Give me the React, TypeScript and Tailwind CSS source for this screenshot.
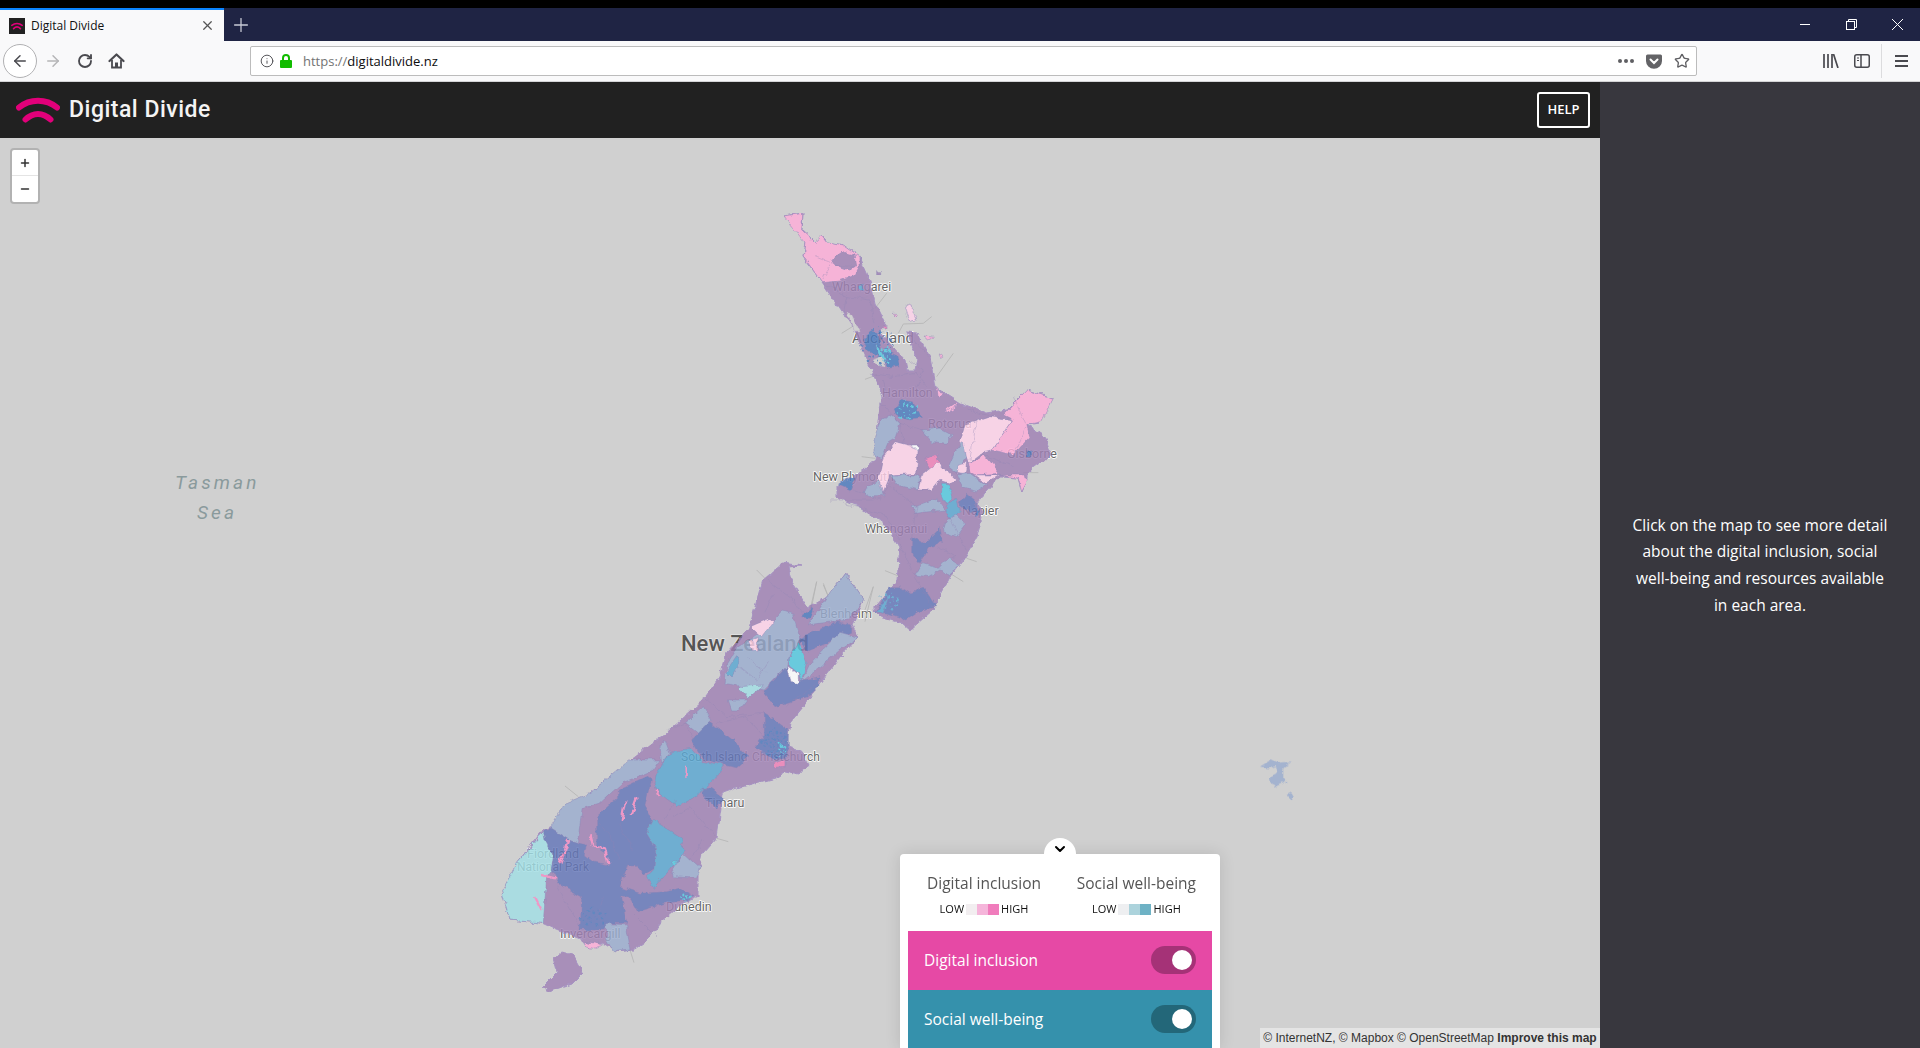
import React from 'react';
import { ArrowLeft, ArrowRight, ChevronDown, Info, Minus, Plus, RotateCw, Star, X } from 'lucide-react';

const C = {
  purple: '#9f81b4',
  pink: '#feadd8',
  pale: '#ffd4eb',
  rose: '#f07fb8',
  grey: '#9aaccf',
  blue: '#6376b9',
  deep: '#4a78bc',
  teal: '#59a7d1',
  cyan: '#52c8e0',
  ice: '#a1dee4',
  white: '#ffffff',
  sea: '#d0d0d0',
};

type Region = [string, string];
type Line = string;

// outlines in page coordinates
const northIsland =
  '784,216 803,213 802,230 815,242 822,235 827,242 843,245 860,257 870,280 875,303 885,323 880,333 893,347 905,360 907,370 915,370 917,360 910,343 907,332 917,333 930,357 935,387 960,403 987,413 1007,410 1027,390 1053,398 1040,423 1027,425 1045,437 1052,455 1027,473 1027,480 1022,492 1018,478 1000,477 985,493 977,503 983,513 977,537 963,560 950,577 933,610 910,630 902,623 880,617 873,610 897,580 900,547 887,527 860,507 837,497 837,487 857,475 877,457 878,420 882,397 880,388 867,360 853,327 822,282 803,257 805,243 802,230';
const southIsland =
  '783,563 802,566 788,567 792,583 808,608 827,597 845,573 863,600 852,625 858,638 840,657 820,683 803,707 790,723 786,745 800,750 808,765 800,775 785,772 775,778 740,787 723,793 717,837 703,853 698,873 698,897 683,903 660,923 647,940 633,950 617,952 603,943 590,948 583,940 557,930 542,923 510,920 502,892 517,863 543,830 567,820 590,793 630,760 670,730 703,700 720,677 727,653 748,630 763,580';
const stewart = '562,952 573,955 583,973 573,983 548,992 542,988 557,973 553,958';

// the four groups below keep the coordinates read off the 3x crops
const z4: Region[] = [
  [C.pink, '72,48 128,40 125,90 165,125 185,105 200,125 250,135 300,170 300,195 285,225 240,240 185,245 130,170 135,130'],
  [C.purple, '215,180 250,157 285,165 290,195 265,210 225,195'],
  [C.deep, '310,420 330,395 355,400 365,450 410,465 420,500 385,505 360,470 325,455'],
  [C.pale, '435,320 450,312 470,360 450,365'],
  [C.pink, '495,408 520,412 505,420'],
  [C.pink, '400,340 410,340 408,348'],
  [C.pink, '535,465 545,462 548,472 538,475'],
  [C.purple, '353,212 362,212 362,222 353,222'],
  [C.rose, '370,374 378,374 378,384 370,384'],
  [C.teal, '295,255 310,252 312,268 298,268'],
  [C.cyan, '345,430 365,450 380,480 360,470'],
  [C.sea, '340,480 370,470 375,500 350,495'],
  [C.sea, '262,340 275,345 300,395 285,395'],
  [C.pink, '530,560 550,585 535,590'],
  [C.pink, '560,625 590,605 585,630 560,640'],
];

const z5: Region[] = [
  [C.pink, '610,105 680,30 760,55 725,125 680,135 690,170 640,225 575,210 640,120'],
  [C.pale, '495,135 570,110 640,120 575,210 550,215 505,250 480,185'],
  [C.pink, '505,250 555,225 600,280 525,285 510,275'],
  [C.pale, '525,285 600,285 560,310'],
  [C.pink, '600,285 670,285 682,305 665,335 655,295'],
  [C.pale, '250,230 285,185 355,200 350,280 270,285 250,335 232,310'],
  [C.grey, '240,120 275,105 300,130 290,170 265,185 245,235 222,230 222,180'],
  [C.grey, '365,150 420,145 458,165 440,190 395,185'],
  [C.grey, '465,215 490,185 500,235 470,280 445,260'],
  [C.rose, '375,240 410,225 420,255 390,270'],
  [C.pale, '365,285 410,250 445,275 470,300 450,310 420,300 395,330 355,330'],
  [C.pale, '475,255 500,250 495,285 472,280'],
  [C.grey, '270,285 360,285 355,330 290,315'],
  [C.grey, '200,320 240,305 255,350 200,350 190,340'],
  [C.grey, '470,285 510,280 560,315 530,335 490,325'],
  [C.grey, '340,380 410,355 435,390 345,400'],
  [C.cyan, '425,310 440,310 460,350 440,375 425,345'],
  [C.teal, '445,370 470,355 478,390 455,420 435,390'],
  [C.blue, '478,370 500,340 530,365 530,395 510,395 490,390'],
  [C.grey, '440,420 465,405 497,435 470,470 430,455'],
  [C.blue, '335,470 375,490 420,445 427,485 385,505 360,550 335,515'],
  [C.grey, '345,585 365,550 415,565 445,535 478,555 450,585 420,570 385,590'],
  [C.deep, '115,315 150,290 165,295 150,330'],
  [C.blue, '225,695 270,620 300,620 330,640 370,625 410,680 365,690 320,720 265,700'],
  [C.teal, '225,695 265,650 250,700'],
  [C.deep, '285,90 300,60 340,65 365,115 330,120 295,110'],
  [C.pink, '440,95 470,70 450,100'],
  [C.deep, '680,215 695,212 695,228 682,228'],
  [C.deep, '525,395 540,395 530,412'],
  [C.white, '335,195 358,195 355,210 335,205'],
];

const z6: Region[] = [
  [C.grey, '200,345 235,290 280,260 330,225 370,180 400,190 420,270 385,320 380,350 310,420 245,410 195,400'],
  [C.pale, '270,230 330,205 340,215 305,260'],
  [C.pale, '265,275 295,265 290,305 275,300'],
  [C.grey, '445,225 500,140 555,70 610,150 565,210 480,220'],
  [C.blue, '420,265 530,215 575,225 575,250 500,280 440,305'],
  [C.grey, '425,395 450,340 540,250 595,265 540,300 470,360'],
  [C.cyan, '385,330 415,270 440,340 425,395 415,370 385,345'],
  [C.blue, '310,425 380,350 390,398 480,380 480,410 440,440 345,470'],
  [C.ice, '235,410 310,405 265,445'],
  [C.teal, '200,365 230,320 240,340 215,380'],
  [C.grey, '205,450 265,450 240,480 215,480'],
  [C.grey, '75,520 130,470 155,510 120,555'],
  [C.grey, '0,590 15,570 30,610 5,640'],
  [C.blue, '310,490 345,510 385,540 385,620 340,630 285,590 310,560'],
  [C.blue, '95,570 150,515 230,580 265,620 230,650 130,630'],
  [C.deep, '425,200 460,170 450,205'],
  [C.rose, '340,640 375,630 375,652 340,656'],
  [C.white, '380,345 415,372 415,400 390,398'],
];

const z7: Region[] = [
  [C.grey, '180,205 225,130 300,100 415,0 510,0 490,30 395,70 330,130 280,145 265,250 215,230'],
  [C.teal, '495,70 505,30 530,-10 570,-30 605,-35 640,5 700,15 690,40 650,80 600,120 560,140 510,100'],
  [C.blue, '640,85 665,85 705,115 680,145 645,115'],
  [C.ice, '160,215 190,290 185,330 170,350 160,490 60,480 35,395 80,310'],
  [C.blue, '160,210 185,205 240,240 290,255 283,285 310,305 355,315 350,280 320,260 320,170 385,110 385,90 470,50 485,60 465,135 490,180 470,220 500,270 495,325 460,345 440,315 410,315 390,380 450,400 530,395 570,385 615,410 590,420 525,430 445,455 420,415 395,410 410,490 370,490 340,510 270,510 275,410 210,375 185,330 190,290 165,240'],
  [C.teal, '490,180 575,235 580,280 540,325 490,385 470,350 495,325 500,270 470,220'],
  [C.cyan, '545,310 575,295 580,315 555,330'],
  [C.grey, '580,280 630,325 620,355 550,350 545,330'],
  [C.grey, '350,490 410,495 420,570 370,575 350,540'],
  [C.pink, '290,545 340,555 310,565 285,560'],
];

const z4Lines: Line[] = ['190,250 260,290 250,340', '260,290 330,300 345,370', '330,520 400,530 470,520 500,560', '370,540 385,600', '450,480 490,510 470,560', '460,420 505,470', '165,170 215,190 185,235', '215,195 290,200'];
const z5Lines: Line[] = ['240,65 300,130 370,150', '300,130 310,190 360,210', '160,330 240,360 270,310', '130,370 250,400 300,480', '270,320 350,380 335,470', '500,90 580,110', '540,220 640,260', '680,135 640,225', '440,400 500,510', '300,490 340,580 400,690', '90,360 220,360', '410,500 470,530 445,535', '640,50 680,140', '530,120 510,240'];
const z6Lines: Line[] = ['320,90 400,150 430,200', '340,130 310,190', '240,350 290,390 330,330', '260,320 320,370', '130,440 200,500 310,490', '170,520 260,500 320,570', '380,470 470,400', '20,540 75,520 100,570'];
const z7Lines: Line[] = ['550,170 600,140 680,230', '410,130 390,200 430,270', '320,180 360,230 390,300', '200,380 240,450 270,500', '430,460 500,530', '340,410 325,470 350,500', '600,300 640,240', '560,120 520,180'];

const z4Strays: Line[] = ['245,400 285,375', '380,280 345,325', '415,400 430,372 490,370 515,350', '580,460 530,530', '315,538 350,525'];
const z5Strays: Line[] = ['185,230 225,235', '670,278 715,278', '500,535 530,545', '450,580 490,605', '255,572 300,590', '35,680 50,605', '70,615 85,650', '220,620 195,690'];
const z6Strays: Line[] = ['290,60 315,85', '470,95 450,180', '490,100 505,140', '640,110 615,215'];
const z7Strays: Line[] = ['225,78 265,110', '680,235 715,245', '420,570 432,608'];

const z7Lakes: Line[] = ['405,125 395,180', '440,115 422,165', '300,220 310,260 345,265 355,310', '235,240 210,310', '155,345 195,355', '590,20 590,50', '500,90 505,105', '135,410 155,450'];

const labels: [string, number, number, number][] = [
  ['Whangarei', 832, 291, 12.5],
  ['Auckland', 852, 343, 15],
  ['Hamilton', 882, 397, 12.5],
  ['Rotorua', 928, 428, 12.5],
  ['Gisborne', 1007, 458, 12.5],
  ['New Plymouth', 813, 481, 12.5],
  ['Napier', 962, 515, 12.5],
  ['Whanganui', 865, 533, 12.5],
  ['Blenheim', 820, 618, 12.5],
  ['South Island', 681, 761, 12],
  ['Christchurch', 752, 761, 12],
  ['Timaru', 705, 807, 12.5],
  ['Dunedin', 666, 911, 12.5],
  ['Invercargill', 560, 938, 12.5],
  ['Fiordland', 527, 858, 12.5],
  ['National Park', 517, 871, 12],
];

// Auckland, Hamilton and Christchurch are made of many tiny areas
function specks(cx: number, cy: number, rx: number, ry: number, count: number, fill: string) {
  return Array.from({ length: count }, (_, i) => {
    const a = i * 2.399;
    const r = Math.sqrt((i + 0.5) / count);
    return <circle key={i} cx={cx + Math.cos(a) * r * rx} cy={cy + Math.sin(a) * r * ry} r={2 + (i % 3)} fill={fill} />;
  });
}

function Group({ x, y, regions, lines, lakes, children }: { x: number; y: number; regions: Region[]; lines: Line[]; lakes?: Line[]; children?: React.ReactNode }) {
  return (
    <g transform={`translate(${x} ${y}) scale(0.3333)`}>
      {regions.map(([fill, pts], i) => (
        <polygon key={i} points={pts} fill={fill} stroke={fill === C.sea ? fill : '#7c72b0'} strokeOpacity="0.55" strokeWidth="2.5" strokeLinejoin="round" />
      ))}
      {lines.map((pts, i) => (
        <polyline key={i} points={pts} fill="none" stroke="#8272ac" strokeOpacity="0.4" strokeWidth="2.5" />
      ))}
      {lakes?.map((pts, i) => (
        <polyline key={i} points={pts} fill="none" stroke="#f58cc4" strokeWidth="7" strokeLinejoin="round" />
      ))}
      {children}
    </g>
  );
}

function Strays({ x, y, lines }: { x: number; y: number; lines: Line[] }) {
  return (
    <g transform={`translate(${x} ${y}) scale(0.3333)`}>
      {lines.map((pts, i) => (
        <polyline key={i} points={pts} fill="none" stroke="#b4b4b4" strokeWidth="2.5" />
      ))}
    </g>
  );
}

function NzMap() {
  return (
    <svg className="absolute inset-0" width="1600" height="910" viewBox="0 138 1600 910">
      <defs>
        <filter id="rough" x="0" y="0" width="100%" height="100%" colorInterpolationFilters="sRGB">
          <feTurbulence type="fractalNoise" baseFrequency="0.13" numOctaves="3" seed="4" result="noise" />
          <feDisplacementMap in="SourceGraphic" in2="noise" scale="6" xChannelSelector="R" yChannelSelector="G" />
          <feGaussianBlur stdDeviation="0.45" />
        </filter>
      </defs>
      <g fontFamily="Roboto, sans-serif" paintOrder="stroke" strokeLinejoin="round">
        <text x="175" y="489" fontSize="19" fontStyle="italic" letterSpacing="3.1" fill="#8a9a9c">Tasman</text>
        <text x="197" y="519" fontSize="19" fontStyle="italic" letterSpacing="3.1" fill="#8a9a9c">Sea</text>
        <text x="681" y="651" fontSize="22" fontWeight="500" fill="#555" stroke="#e4e4e4" strokeWidth="1.5">New Zealand</text>
        {labels.map(([t, x, y, s]) => (
          <text key={t} x={x} y={y} fontSize={s} fill="#666" stroke="#fff" strokeWidth="1.5">{t}</text>
        ))}
      </g>
      <Strays x={760} y={200} lines={z4Strays} />
      <Strays x={800} y={380} lines={z5Strays} />
      <Strays x={660} y={550} lines={z6Strays} />
      <Strays x={490} y={760} lines={z7Strays} />
      <g opacity="0.82" filter="url(#rough)">
        <polygon points={northIsland} fill={C.purple} stroke="#9d85c0" strokeWidth="1" strokeLinejoin="round" />
        <polygon points={southIsland} fill={C.purple} stroke="#9d85c0" strokeWidth="1" strokeLinejoin="round" />
        <polygon points={stewart} fill={C.purple} stroke="#9d85c0" strokeWidth="1" strokeLinejoin="round" />
        <Group x={760} y={200} regions={z4} lines={z4Lines}>
          {specks(355, 440, 50, 60, 40, C.deep)}
          {specks(375, 465, 20, 25, 12, C.cyan)}
        </Group>
        <Group x={800} y={380} regions={z5} lines={z5Lines}>
          {specks(320, 90, 35, 30, 16, C.cyan)}
          {specks(265, 665, 30, 30, 14, C.teal)}
        </Group>
        <Group x={660} y={550} regions={z6} lines={z6Lines}>
          {specks(345, 580, 38, 45, 40, C.deep)}
          {specks(365, 600, 15, 20, 10, C.cyan)}
        </Group>
        <Group x={490} y={760} regions={z7} lines={z7Lines} lakes={z7Lakes}>
          {specks(310, 470, 40, 30, 18, C.deep)}
          {specks(590, 415, 22, 10, 8, C.cyan)}
        </Group>
        <g transform="translate(1240 740) scale(0.3333)" fill={C.grey}>
          <polygon points="60,80 95,58 115,68 155,65 130,85 130,115 140,125 110,140 92,130 90,112 112,100 108,78 85,85" />
          <polygon points="140,165 155,157 162,170 155,182 148,175" />
        </g>
      </g>
    </svg>
  );
}

function BrandMark({ className }: { className: string }) {
  return (
    <svg className={className} viewBox="0 0 44 26" fill="none" stroke="#e2007a" strokeLinecap="round">
      <path d="M3 10.5 C14 1.5 30 1.5 41 10.5" strokeWidth="6" />
      <path d="M9.5 22.5 C17 15 27 15 34.5 22.5" strokeWidth="6" />
    </svg>
  );
}

function TabStrip() {
  return (
    <div className="flex h-[33px] bg-[#1f2444]">
      <div className="flex w-[224px] items-center border-t-2 border-[#0a84ff] bg-[#f9f9fa] pl-[9px] pr-[9px]">
        <div className="flex h-4 w-4 items-center justify-center bg-[#212121]">
          <BrandMark className="h-2 w-3" />
        </div>
        <span className="ml-[6px] flex-1 text-xs text-[#111]">Digital Divide</span>
        <X size={15} strokeWidth={2} className="text-[#555]" />
      </div>
      <div className="flex w-[34px] items-center justify-center">
        <Plus size={22} strokeWidth={1.4} className="text-[#c8cad6]" />
      </div>
      <div className="flex-1" />
      <div className="flex items-center text-white">
        <div className="flex w-[46px] justify-center">
          <div className="h-px w-[10px] bg-white" />
        </div>
        <div className="flex w-[46px] justify-center">
          <svg width="11" height="11" viewBox="0 0 11 11" fill="none" stroke="white">
            <rect x="0.5" y="2.5" width="8" height="8" />
            <path d="M2.5 2.5V0.5H10.5V8.5H8.5" />
          </svg>
        </div>
        <div className="flex w-[46px] justify-center">
          <svg width="11" height="11" viewBox="0 0 11 11" stroke="white">
            <path d="M0 0L11 11M11 0L0 11" />
          </svg>
        </div>
      </div>
    </div>
  );
}

function Toolbar() {
  return (
    <div className="flex h-[41px] items-center border-b border-[#d4d4d6] bg-[#f9f9fa]">
      <div className="ml-[3px] flex h-[34px] w-[34px] items-center justify-center rounded-full border border-[#b1b1b3] bg-white">
        <ArrowLeft size={18} strokeWidth={2} className="text-[#4a4a4f]" />
      </div>
      <ArrowRight size={18} strokeWidth={2} className="ml-[7px] text-[#b5b5b7]" />
      <RotateCw size={16} strokeWidth={2.8} className="ml-[15px] text-[#4a4a4f]" />
      <svg className="ml-[15px]" width="17" height="16" viewBox="0 0 16 16" fill="none" stroke="#4a4a4f">
        <path d="M1 8L8 1.5L15 8" strokeWidth="2.2" strokeLinecap="round" strokeLinejoin="round" />
        <path d="M3.5 7V14.5H12.5V7" strokeWidth="1.8" />
        <rect x="6.5" y="9.5" width="3" height="5" fill="#4a4a4f" stroke="none" />
      </svg>
      <div className="ml-[125px] flex h-[30px] w-[1447px] items-center rounded-[2px] border border-[#bcbcbc] bg-white pl-[9px] pr-[6px]">
        <Info size={14} strokeWidth={1.6} className="text-[#4a4a4f]" />
        <svg className="ml-[6px]" width="12" height="14" viewBox="0 0 12 14">
          <path d="M3 6.5V4A3 3 0 0 1 9 4V6.5" fill="none" stroke="#12bc00" strokeWidth="2" />
          <rect y="6" width="12" height="8" rx="1" fill="#12bc00" />
        </svg>
        <span className="ml-[11px] mt-[2px] flex-1 text-[13px] text-[#0c0c0d]">
          <span className="text-[#737373]">https://</span>digitaldivide.nz
        </span>
        <div className="flex gap-[2px]">
          <div className="h-1 w-1 rounded-full bg-[#5f5f63]" />
          <div className="h-1 w-1 rounded-full bg-[#5f5f63]" />
          <div className="h-1 w-1 rounded-full bg-[#5f5f63]" />
        </div>
        <svg className="ml-[12px]" width="16" height="15" viewBox="0 0 16 15">
          <path d="M1.5 0.5H14.5A1.5 1.5 0 0 1 16 2V7A7.8 7.5 0 0 1 0 7V2A1.5 1.5 0 0 1 1.5 0.5Z" fill="#636366" />
          <path d="M4.5 5.5L8 9L11.5 5.5" fill="none" stroke="white" strokeWidth="2" strokeLinecap="round" />
        </svg>
        <Star size={16} strokeWidth={2} className="ml-[12px] text-[#5f5f63]" />
      </div>
      <div className="ml-[126px] flex items-center text-[#4a4a4f]">
        <svg width="16" height="14" viewBox="0 0 16 14" stroke="currentColor" strokeWidth="1.7" fill="none">
          <path d="M1 0V14M5 0V14M9 0V14M10.5 0L15 14" />
        </svg>
        <svg className="ml-[15px]" width="16" height="14" viewBox="0 0 16 14" stroke="currentColor" fill="none">
          <rect x="0.75" y="0.75" width="14.5" height="12.5" rx="2" strokeWidth="1.5" />
          <path d="M7 1V13" strokeWidth="1.5" />
          <path d="M3 4H5M3 6.5H5" strokeWidth="1.2" />
        </svg>
        <div className="ml-[11px] h-[34px] w-px bg-[#dcdcde]" />
        <svg className="ml-[13px]" width="13" height="12" viewBox="0 0 13 12" fill="currentColor">
          <rect width="13" height="2" />
          <rect y="5" width="13" height="2" />
          <rect y="10" width="13" height="2" />
        </svg>
      </div>
    </div>
  );
}

function LegendKey({ title, colors }: { title: string; colors: string[] }) {
  return (
    <div className="flex flex-col items-center">
      <div className="text-[15.5px] leading-[22px] text-[#555]">{title}</div>
      <div className="mt-[10px] flex h-[11px] items-center text-[11px] text-[#111]">
        <span>LOW</span>
        <div className="mx-[2px] flex">
          {colors.map((c) => (
            <div key={c} className="h-[11px] w-[11px]" style={{ backgroundColor: c }} />
          ))}
        </div>
        <span>HIGH</span>
      </div>
    </div>
  );
}

function LayerRow({ label, bg, track }: { label: string; bg: string; track: string }) {
  return (
    <div className={`flex h-[59px] items-start justify-between pl-4 pr-4 pt-[15px] ${bg}`}>
      <span className="text-[15.5px] leading-[28px] text-white">{label}</span>
      <div className={`flex h-[28px] w-[45px] items-center justify-end rounded-full pr-1 ${track}`}>
        <div className="h-5 w-5 rounded-full bg-white" />
      </div>
    </div>
  );
}

function Legend() {
  return (
    <div className="absolute left-[900px] top-[716px] w-[320px] rounded-t-[4px] bg-white px-2 shadow-[0_0_16px_rgba(0,0,0,0.12)]">
      <div className="absolute -top-4 left-[144px] flex h-8 w-8 items-start justify-center rounded-full bg-white pt-[3px]">
        <ChevronDown size={16} strokeWidth={3} className="text-black" />
      </div>
      <div className="relative flex h-[77px] justify-between pl-[19px] pr-[16px] pt-[18px]">
        <LegendKey title="Digital inclusion" colors={['#f2eef0', '#f5b5da', '#f07cbc']} />
        <LegendKey title="Social well-being" colors={['#eeeff1', '#acd3dc', '#6eb2c5']} />
      </div>
      <LayerRow label="Digital inclusion" bg="bg-[#e649a5]" track="bg-[#a53277]" />
      <LayerRow label="Social well-being" bg="bg-[#3591ac]" track="bg-[#236779]" />
    </div>
  );
}

export default function App() {
  return (
    <div className="flex h-screen flex-col overflow-hidden bg-black pt-2 font-['Open_Sans',sans-serif]">
      <TabStrip />
      <Toolbar />
      <div className="flex min-h-0 flex-1">
        <div className="flex w-[1600px] flex-col">
          <header className="flex h-[56px] items-center justify-between bg-[#212121] pl-4 pr-[10px]">
            <div className="flex items-center">
              <BrandMark className="h-[26px] w-[44px]" />
              <span className="ml-[9px] mt-[1px] font-['Roboto',sans-serif] text-[23px] font-medium tracking-[0.5px] text-[#f4f4f4]">Digital Divide</span>
            </div>
            <button className="h-[36px] w-[53px] rounded-[3px] border-2 border-white text-[13px] font-semibold text-white">HELP</button>
          </header>
          <main className="relative flex-1 overflow-hidden bg-[#d0d0d0]">
            <NzMap />
            <div className="absolute left-[10px] top-[10px] flex flex-col rounded-[4px] border-2 border-[#b2b2b2] bg-white text-[#333]">
              <div className="flex h-[26px] w-[26px] items-center justify-center border-b border-[#e4e4e4]">
                <Plus size={12} strokeWidth={3} />
              </div>
              <div className="flex h-[26px] w-[26px] items-center justify-center">
                <Minus size={12} strokeWidth={3} />
              </div>
            </div>
            <Legend />
            <div className="absolute bottom-0 right-0 flex h-5 w-[340px] items-center justify-center bg-[#e4e4e4] font-['Liberation_Sans',sans-serif] text-xs text-[#333]">
              <span>© InternetNZ, © Mapbox © OpenStreetMap <b>Improve this map</b></span>
            </div>
          </main>
        </div>
        <aside className="flex flex-1 items-center justify-center bg-[#38373e] text-center text-[15.5px] leading-[26.6px] text-white">
          <p>
            Click on the map to see more detail
            <br />
            about the digital inclusion, social
            <br />
            well-being and resources available
            <br />
            in each area.
          </p>
        </aside>
      </div>
    </div>
  );
}
